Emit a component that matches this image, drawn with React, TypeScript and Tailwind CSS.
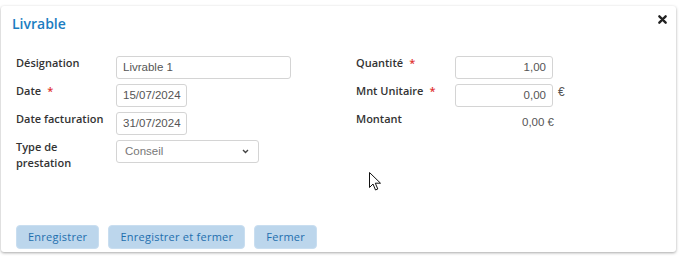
import React from "react"

const label = "text-[11px] font-semibold text-[#333] leading-4 -mt-[1px]"
const input =
  "h-[23px] border border-[#d4d4d4] rounded-[3px] bg-white px-[6px] text-[11.5px] text-[#555] flex items-center font-['Liberation_Sans',Arial,sans-serif]"

function Star() {
  return <span className="text-[#e0312f] ml-[6px]">*</span>
}

export default function App() {
  return (
    <div className="w-[683px] h-[256px] bg-white pt-[6px] pl-[1px] relative font-['Open_Sans',sans-serif]">
      <div className="w-[675px] h-[246px] bg-white rounded-[3px] shadow-[0_1px_3px_rgba(0,0,0,0.35)] flex flex-col">
        {/* Header */}
        <div className="flex items-start justify-between pl-[11px] pr-[9px] pt-[8px]">
          <h1 className="text-[14px] font-semibold text-[#1b7dc1] leading-5">Livrable</h1>
          <svg width="9" height="9" viewBox="0 0 10 10" className="mt-[1px]">
            <path d="M1.5 1.5 L8.5 8.5 M8.5 1.5 L1.5 8.5" stroke="#222" strokeWidth="2.6" strokeLinecap="round" />
          </svg>
        </div>

        {/* Body */}
        <div className="flex pl-[15px] pt-[22px] h-[169px]">
          <div className="w-[340px] flex flex-col gap-[5px]">
            <div className="flex">
              <div className={`w-[100px] ${label}`}>Désignation</div>
              <div className={`${input} w-[175px]`}>Livrable 1</div>
            </div>
            <div className="flex">
              <div className={`w-[100px] ${label}`}>
                Date<Star />
              </div>
              <div className={`${input} w-[71px]`}>15/07/2024</div>
            </div>
            <div className="flex">
              <div className={`w-[100px] ${label}`}>Date facturation</div>
              <div className={`${input} w-[71px]`}>31/07/2024</div>
            </div>
            <div className="flex">
              <div className={`w-[100px] ${label}`}>
                Type de
                <br />
                prestation
              </div>
              <div className={`${input} w-[143px] justify-between text-[#777] pl-[8px]`}>
                <span>Conseil</span>
                <svg width="7" height="5" viewBox="0 0 7 5" className="mr-[3px]">
                  <path d="M1 1 L3.5 3.5 L6 1" stroke="#444" strokeWidth="1.4" fill="none" />
                </svg>
              </div>
            </div>
          </div>

          <div className="flex flex-col gap-[5px]">
            <div className="flex">
              <div className={`w-[99px] ${label}`}>
                Quantité<Star />
              </div>
              <div className={`${input} w-[98px] justify-end`}>1,00</div>
            </div>
            <div className="flex">
              <div className={`w-[99px] ${label}`}>
                Mnt Unitaire<Star />
              </div>
              <div className={`${input} w-[98px] justify-end`}>0,00</div>
              <span className="text-[12px] text-[#555] ml-[5px] leading-4 font-['Liberation_Sans',Arial,sans-serif]">€</span>
            </div>
            <div className="flex">
              <div className={`w-[99px] ${label}`}>Montant</div>
              <div className="w-[99px] text-right text-[11.5px] text-[#555] pt-[2px] leading-4 font-['Liberation_Sans',Arial,sans-serif]">
                0,00 €
              </div>
            </div>
          </div>
        </div>

        {/* Footer */}
        <div className="flex gap-[9px] pl-[15px] pt-[22px]">
          {["Enregistrer", "Enregistrer et fermer", "Fermer"].map((b) => (
            <button
              key={b}
              className="h-[24px] px-[11px] rounded-[4px] bg-[#bcd6ec] border border-[#c9def0] text-[11px] font-medium tracking-[0.25px] text-[#1e6fae]"
            >
              {b}
            </button>
          ))}
        </div>
      </div>

      {/* mouse cursor */}
      <svg width="13" height="20" viewBox="0 0 13 20" className="absolute left-[369px] top-[172px]">
        <path d="M0.5 0.5 L0.5 15.5 L4 12 L6.5 18 L8.8 17 L6.3 11.2 L11.5 11.2 Z" fill="#fff" stroke="#111" strokeWidth="1" />
      </svg>
    </div>
  )
}
